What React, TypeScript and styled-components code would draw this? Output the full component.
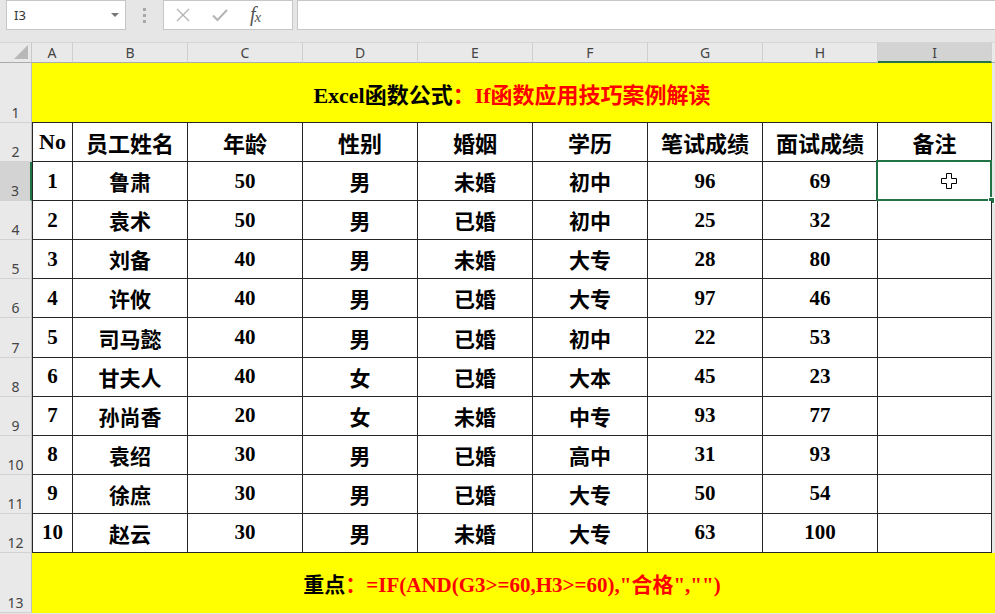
import React from "react";
import styled, { createGlobalStyle, css } from "styled-components";

const GlobalStyle = createGlobalStyle`
  html, body {
    margin: 0;
    padding: 0;
    background: #e6e6e6;
    overflow: hidden;
  }
`;

const Screen = styled.div`
  width: 995px;
  height: 614px;
  overflow: hidden;
  display: flex;
  flex-direction: column;
  background: #e6e6e6;
  font-family: "Noto Sans", "Liberation Sans", sans-serif;
`;

const TopBar = styled.div`
  height: 42px;
  flex: none;
  display: flex;
  align-items: flex-start;
  padding-left: 6px;
  box-sizing: border-box;
`;

const NameBox = styled.div`
  width: 120px;
  height: 30px;
  box-sizing: border-box;
  background: #fff;
  border: 1px solid #c6c6c6;
  display: flex;
  align-items: center;
  justify-content: space-between;
  padding: 0 6px 0 7px;
  font-size: 13px;
  color: #333;
`;

const DropArrow = styled.span`
  width: 0;
  height: 0;
  border-left: 4px solid transparent;
  border-right: 4px solid transparent;
  border-top: 4px solid #777;
`;

const Grip = styled.div`
  width: 37px;
  height: 30px;
  display: flex;
  flex-direction: column;
  align-items: center;
  justify-content: center;
  gap: 3px;
  span {
    width: 3px;
    height: 3px;
    background: #a8a8a8;
  }
`;

const FuncBox = styled.div`
  width: 130px;
  height: 30px;
  box-sizing: border-box;
  background: #fff;
  border: 1px solid #c6c6c6;
  display: flex;
  align-items: center;
  padding-left: 12px;
  gap: 22px;
`;

const FxLabel = styled.span`
  font-family: "Liberation Serif", serif;
  font-style: italic;
  font-size: 20px;
  line-height: 20px;
  color: #555;
  margin-left: 0;
  sub {
    font-size: 15px;
    vertical-align: -1px;
    margin-left: -1px;
  }
`;

const FormulaInput = styled.div`
  flex: 1;
  height: 30px;
  margin-left: 4px;
  box-sizing: border-box;
  background: #fff;
  border: 1px solid #c6c6c6;
  border-right: none;
`;

const Sheet = styled.div`
  display: grid;
  grid-template-columns: 32px 41px repeat(7, 115px) 114px 3px;
  grid-template-rows: 21px 60px repeat(11, 39.1px) 60px;
`;

const Corner = styled.div`
  background: #e9e9e9;
  border-top: 1px solid #d6d6d6;
  border-bottom: 1px solid #ababab;
  border-right: 1px solid #c8c8c8;
  box-sizing: border-box;
  position: relative;
  &::after {
    content: "";
    position: absolute;
    right: 3px;
    bottom: 3px;
    width: 0;
    height: 0;
    border-left: 14px solid transparent;
    border-bottom: 14px solid #b8b8b8;
  }
`;

const ColHeader = styled.div<{ $active?: boolean }>`
  box-sizing: border-box;
  background: ${(p) => (p.$active ? "#d3d3d3" : "#e9e9e9")};
  border-top: 1px solid #d6d6d6;
  border-right: 1px solid #cfcfcf;
  border-bottom: ${(p) => (p.$active ? "2px solid #217346" : "1px solid #ababab")};
  display: flex;
  align-items: center;
  justify-content: center;
  font-size: 14px;
  color: #444;
`;

const HeaderTail = styled.div`
  background: #e9e9e9;
  border-top: 1px solid #d6d6d6;
  border-bottom: 1px solid #ababab;
  box-sizing: border-box;
`;

const RowHeader = styled.div<{ $active?: boolean }>`
  grid-column: 1;
  box-sizing: border-box;
  background: ${(p) => (p.$active ? "#d3d3d3" : "#e9e9e9")};
  border-bottom: 1px solid #d2d2d2;
  border-right: ${(p) => (p.$active ? "2px solid #217346" : "1px solid #bdbdbd")};
  display: flex;
  align-items: flex-end;
  justify-content: center;
  padding-bottom: 1px;
  font-size: 14px;
  line-height: 16px;
  color: #444;
`;

const Banner = styled.div<{ $size: number; $top?: boolean }>`
  grid-column: 2 / 11;
  background: #ffff00;
  box-sizing: border-box;
  display: flex;
  align-items: center;
  justify-content: center;
  font-family: "Liberation Serif", "Noto Sans CJK SC", serif;
  font-weight: 700;
  font-size: ${(p) => p.$size}px;
  color: #000;
  ${(p) =>
    p.$top &&
    css`
      border-bottom: 1px solid #262626;
    `}
`;

const Red = styled.span`
  color: #ff0000;
`;

const Tail = styled.div<{ $yellow?: boolean }>`
  grid-column: 11;
  background: ${(p) => (p.$yellow ? "#ffff00" : "#e6e6e6")};
`;

const Cell = styled.div<{ $first?: boolean; $selected?: boolean }>`
  box-sizing: border-box;
  background: #fff;
  border-right: 1px solid #262626;
  border-bottom: 1px solid #262626;
  ${(p) =>
    p.$first &&
    css`
      border-left: 1px solid #262626;
    `}
  display: flex;
  align-items: center;
  justify-content: center;
  font-family: "Liberation Serif", "Noto Sans CJK SC", serif;
  font-weight: 700;
  font-size: 21px;
  color: #000;
  position: relative;
  ${(p) =>
    p.$selected &&
    css`
      &::before {
        content: "";
        position: absolute;
        left: -2px;
        top: -2px;
        right: -1px;
        bottom: -1px;
        border: 2px solid #217346;
      }
      &::after {
        content: "";
        position: absolute;
        right: -4px;
        bottom: -4px;
        width: 5px;
        height: 5px;
        background: #217346;
        border: 1px solid #fff;
      }
    `}
`;

const HeadCell = styled(Cell)`
  font-size: 22px;
`;

const Pointer = styled.svg`
  position: absolute;
  left: 63px;
  top: 11px;
`;

const headers = ["No", "员工姓名", "年龄", "性别", "婚姻", "学历", "笔试成绩", "面试成绩", "备注"];

const rows: (string | number)[][] = [
  [1, "鲁肃", 50, "男", "未婚", "初中", 96, 69],
  [2, "袁术", 50, "男", "已婚", "初中", 25, 32],
  [3, "刘备", 40, "男", "未婚", "大专", 28, 80],
  [4, "许攸", 40, "男", "已婚", "大专", 97, 46],
  [5, "司马懿", 40, "男", "已婚", "初中", 22, 53],
  [6, "甘夫人", 40, "女", "已婚", "大本", 45, 23],
  [7, "孙尚香", 20, "女", "未婚", "中专", 93, 77],
  [8, "袁绍", 30, "男", "已婚", "高中", 31, 93],
  [9, "徐庶", 30, "男", "已婚", "大专", 50, 54],
  [10, "赵云", 30, "男", "未婚", "大专", 63, 100],
];

const letters = ["A", "B", "C", "D", "E", "F", "G", "H", "I"];

const App: React.FC = () => {
  return (
    <Screen>
      <GlobalStyle />
      <TopBar>
        <NameBox>
          <span>I3</span>
          <DropArrow />
        </NameBox>
        <Grip>
          <span />
          <span />
          <span />
        </Grip>
        <FuncBox>
          <svg width="14" height="14" viewBox="0 0 14 14">
            <path d="M1 1 L13 13 M13 1 L1 13" stroke="#b4b4b4" strokeWidth="1.4" fill="none" />
          </svg>
          <svg width="16" height="14" viewBox="0 0 16 14">
            <path d="M1 7.5 L5.5 12 L15 2" stroke="#b4b4b4" strokeWidth="2" fill="none" />
          </svg>
          <FxLabel>
            f<sub>x</sub>
          </FxLabel>
        </FuncBox>
        <FormulaInput />
      </TopBar>

      <Sheet>
        <Corner />
        {letters.map((l) => (
          <ColHeader key={l} $active={l === "I"}>
            {l}
          </ColHeader>
        ))}
        <HeaderTail />

        <RowHeader>1</RowHeader>
        <Banner $size={22} $top>
          Excel函数公式<Red>：If函数应用技巧案例解读</Red>
        </Banner>
        <Tail />

        <RowHeader>2</RowHeader>
        {headers.map((h, i) => (
          <HeadCell key={h} $first={i === 0}>
            {h}
          </HeadCell>
        ))}
        <Tail />

        {rows.map((r, ri) => (
          <React.Fragment key={ri}>
            <RowHeader $active={ri === 0}>{ri + 3}</RowHeader>
            {r.map((v, ci) => (
              <Cell key={ci} $first={ci === 0}>
                {v}
              </Cell>
            ))}
            <Cell $selected={ri === 0}>
              {ri === 0 && (
                <Pointer width="16" height="16" viewBox="0 0 16 16">
                  <path
                    d="M5.5 0.5 H10.5 V5.5 H15.5 V10.5 H10.5 V15.5 H5.5 V10.5 H0.5 V5.5 H5.5 Z"
                    fill="#fff"
                    stroke="#000"
                    strokeWidth="1"
                  />
                </Pointer>
              )}
            </Cell>
            <Tail />
          </React.Fragment>
        ))}

        <RowHeader>13</RowHeader>
        <Banner $size={21}>
          重点<Red>：=IF(AND(G3&gt;=60,H3&gt;=60),"合格","")</Red>
        </Banner>
        <Tail $yellow />
      </Sheet>
    </Screen>
  );
};

export default App;
